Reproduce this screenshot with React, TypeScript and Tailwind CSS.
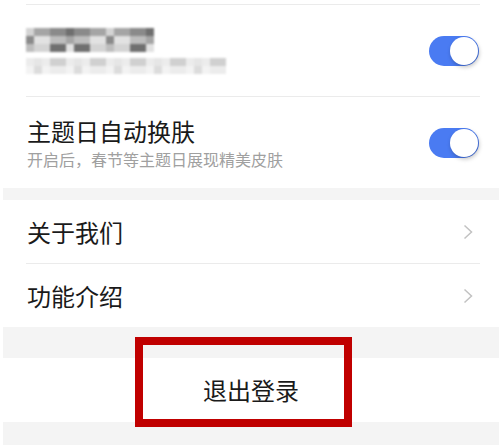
import React from "react";

const font = { fontFamily: '"Noto Sans CJK SC", "Noto Sans", sans-serif' };

function Toggle() {
  return (
    <div className="relative h-[30px] w-[50px] rounded-full bg-[#4a7bf2]">
      <div className="absolute right-[1px] top-[1px] h-[28px] w-[28px] rounded-full bg-white shadow-[1px_2px_4px_rgba(0,0,0,0.25)]" />
    </div>
  );
}

function Chevron() {
  return (
    <svg width="10" height="16" viewBox="0 0 10 16" className="mr-[6px]">
      <path d="M1.5 1.5 L8.5 8 L1.5 14.5" fill="none" stroke="#c2c2c2" strokeWidth="1.5" />
    </svg>
  );
}

// pixelated block standing in for censored text
function Mosaic({ cols, rows, shades }: { cols: number; rows: number; shades: string[] }) {
  const cells = [];
  for (let r = 0; r < rows; r++) {
    for (let c = 0; c < cols; c++) {
      cells.push(
        <rect
          key={r + "-" + c}
          x={c * 8}
          y={r * 8}
          width="8"
          height="8"
          fill={shades[(r * 7 + c * 3 + ((c * c) % 5)) % shades.length]}
        />
      );
    }
  }
  return (
    <svg width={cols * 8} height={rows * 8} style={{ filter: "blur(1.2px)" }}>
      {cells}
    </svg>
  );
}

function Divider() {
  return <div className="ml-[23px] mr-[19px] h-px bg-[#ebebeb]" />;
}

export default function App() {
  return (
    <div className="h-[445px] w-[499px] overflow-hidden bg-white" style={font}>
      <div className="ml-[3px] bg-[#f4f4f4]">
        <div className="bg-white">
          <div className="h-[4px]" />
          <Divider />
          <div className="flex h-[91px] items-center justify-between pl-[23px] pr-[20px]">
            <div className="flex flex-col gap-[6px]">
              <Mosaic cols={16} rows={3} shades={["#d4d4d4", "#8a8a8a", "#bdbdbd", "#6f6f6f", "#a5a5a5", "#e2e2e2"]} />
              <Mosaic cols={25} rows={2} shades={["#ececec", "#dcdcdc", "#f3f3f3", "#d0d0d0", "#e6e6e6"]} />
            </div>
            <Toggle />
          </div>
          <Divider />
          <div className="flex h-[91px] items-center justify-between pl-[24px] pr-[20px]">
            <div className="flex flex-col">
              <span className="text-[24px] leading-[30px] text-[#1a1a1a]">主题日自动换肤</span>
              <span className="mt-[2px] text-[16px] leading-[22px] text-[#a0a0a0]">开启后，春节等主题日展现精美皮肤</span>
            </div>
            <Toggle />
          </div>
        </div>

        <div className="mt-[12px] bg-white">
          <div className="flex h-[63px] items-center justify-between pl-[24px] pr-[20px]">
            <span className="text-[24px] text-[#1a1a1a]">关于我们</span>
            <Chevron />
          </div>
          <Divider />
          <div className="flex h-[63px] items-center justify-between pl-[24px] pr-[20px]">
            <span className="text-[24px] text-[#1a1a1a]">功能介绍</span>
            <Chevron />
          </div>
        </div>

        <div className="relative mt-[31px] flex h-[64px] items-center justify-center bg-white">
          <span className="text-[24px] text-[#1a1a1a]">退出登录</span>
        </div>
        <div className="h-[30px]" />
      </div>

      <div className="absolute left-[135px] top-[337px] h-[90px] w-[217px] border-[8px] border-[#c00000]" />
    </div>
  );
}
